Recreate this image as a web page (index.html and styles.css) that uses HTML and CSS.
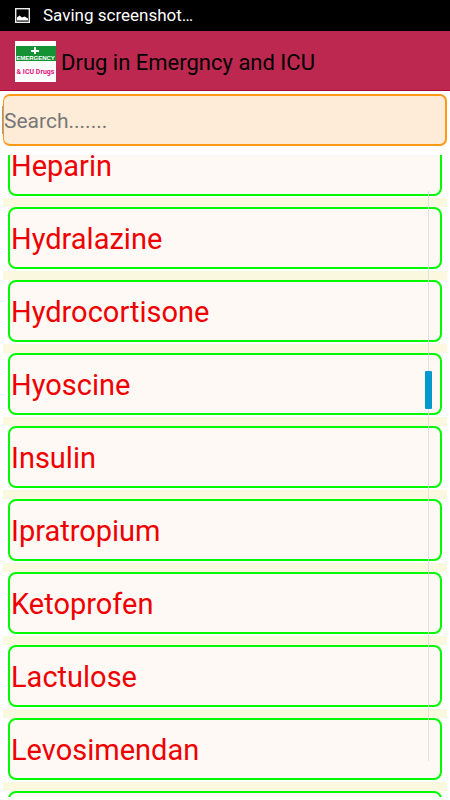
FILE: index.html
```html
<!DOCTYPE html>
<html lang="en">
<head>
<meta charset="utf-8">
<meta name="viewport" content="width=device-width, initial-scale=1">
<title>Drug in Emergncy and ICU</title>
<link rel="stylesheet" href="styles.css">
</head>
<body>
<div class="status-bar">
  <svg class="status-icon" viewBox="0 0 15 15" aria-hidden="true">
    <rect x="0.7" y="0.7" width="13.6" height="13.6" fill="none" stroke="#eee" stroke-width="1.4"/>
    <path d="M2 12.5V9.5L4.5 7.5L7 9.5L9.5 8.5L13 10.5V12.5Z" fill="#fff"/>
  </svg>
  <span>Saving screenshot…</span>
</div>
<header class="app-bar">
  <svg class="app-logo" viewBox="0 0 41 41" aria-hidden="true">
    <rect width="41" height="41" fill="#fff"/>
    <rect x="1" y="5" width="40" height="15" fill="#159334"/>
    <path d="M19 6h2v3h3v2h-3v2h-2v-2h-3V9h3z" fill="#fff"/>
    <text class="logo-top" x="20.5" y="19" text-anchor="middle">EMERGENCY</text>
    <text class="logo-bottom" x="20.5" y="33" text-anchor="middle">&amp; ICU Drugs</text>
  </svg>
  <h1 class="app-title">Drug in Emergncy and ICU</h1>
</header>
<main class="content">
  <div class="search-box">
    <input class="search" type="text" placeholder="Search......." aria-label="Search">
  </div>
  <div class="list-view">
    <ul class="drug-list">
      <li class="row"><div class="card">Heparin</div></li>
      <li class="row"><div class="card">Hydralazine</div></li>
      <li class="row"><div class="card">Hydrocortisone</div></li>
      <li class="row"><div class="card">Hyoscine</div></li>
      <li class="row"><div class="card">Insulin</div></li>
      <li class="row"><div class="card">Ipratropium</div></li>
      <li class="row"><div class="card">Ketoprofen</div></li>
      <li class="row"><div class="card">Lactulose</div></li>
      <li class="row"><div class="card">Levosimendan</div></li>
      <li class="row"><div class="card"></div></li>
    </ul>
    <div class="scroll-track"><div class="scroll-thumb"></div></div>
  </div>
</main>
</body>
</html>
```
FILE: styles.css
```css
* {
  box-sizing: border-box;
}

body {
  margin: 0;
  height: 100vh;
  display: flex;
  flex-direction: column;
  overflow: hidden;
  background: #fff;
  font-family: Roboto, "Liberation Sans", sans-serif;
}

.status-bar {
  flex: none;
  display: flex;
  align-items: center;
  gap: 13px;
  height: 31px;
  padding: 0 15px 1px;
  background: #000;
  color: #fff;
  font-size: 17px;
}

.status-icon {
  width: 15px;
  height: 15px;
}

.app-bar {
  flex: none;
  display: flex;
  align-items: center;
  gap: 5px;
  height: 60px;
  padding: 2px 15px 0;
  background: #bc2850;
  border-bottom: 1px solid #b00434;
}

.app-logo {
  width: 41px;
  height: 41px;
}

.logo-top {
  font: bold 6px "Liberation Sans", sans-serif;
  fill: #fff;
}

.logo-bottom {
  font: bold 7px Roboto, "Liberation Sans", sans-serif;
  fill: #e2127a;
}

.app-title {
  margin: 0;
  padding-top: 2px;
  color: #000;
  font-size: 22px;
  font-weight: 400;
}

.content {
  flex: 1;
  min-height: 0;
  display: flex;
  flex-direction: column;
  gap: 9px;
  padding: 3px;
}

.search-box {
  position: relative;
  flex: none;
}

.search-box::before {
  content: "";
  position: absolute;
  top: 12px;
  left: -1px;
  width: 1px;
  height: 28px;
  background: #8e9aa8;
}

.search {
  display: block;
  width: 100%;
  height: 52px;
  padding: 2px 0 0;
  border: 2px solid #ff9a18;
  border-left-width: 1px;
  border-radius: 7px;
  background: #ffecd8;
  color: #000;
  font-family: inherit;
  font-size: 21px;
  outline: none;
}

.search::placeholder {
  color: #777;
}

.list-view {
  position: relative;
  flex: 1;
  min-height: 0;
  overflow: hidden;
}

.drug-list {
  margin: -21px 0 0;
  padding: 0;
  list-style: none;
}

.row {
  padding: 0 5px 2px;
  border-bottom: 9px solid #faf8df;
}

.card {
  display: flex;
  align-items: center;
  height: 62px;
  padding: 2px 1px 0;
  border: 2px solid #00fa00;
  border-radius: 8px;
  background: #fff9f5;
  color: #ee0000;
  font-size: 29px;
}

.scroll-track {
  position: absolute;
  top: 36px;
  right: 18px;
  bottom: 36px;
  width: 1px;
  background: #e8e2df;
}

.scroll-thumb {
  position: absolute;
  top: 180px;
  left: -3px;
  width: 7px;
  height: 38px;
  border-radius: 1px;
  background: #0099cc;
}
```
